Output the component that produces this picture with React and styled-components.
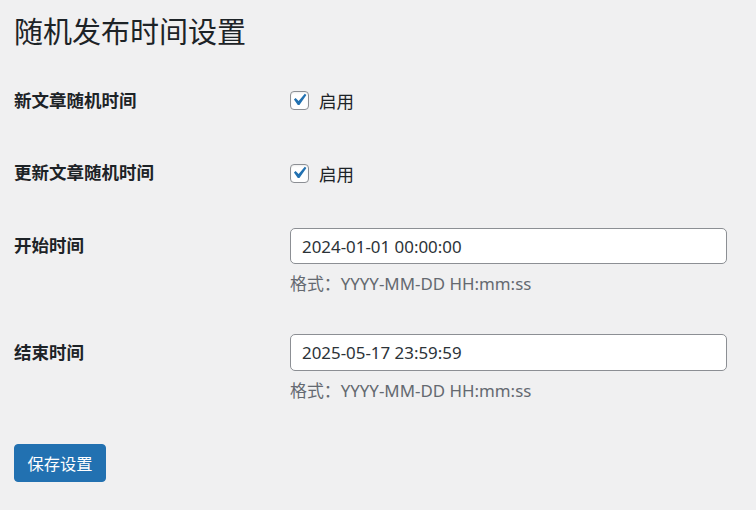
import React from "react";
import styled, { createGlobalStyle } from "styled-components";

const GlobalStyle = createGlobalStyle`
    html, body {
        margin: 0;
        padding: 0;
        background: #f0f0f1;
    }
    body {
        font-family: "Noto Sans", "Noto Sans CJK SC", sans-serif;
        color: #1d2327;
    }
`;

// 设置项
const rows = [
    { label: "新文章随机时间", type: "checkbox", checked: true },
    { label: "更新文章随机时间", type: "checkbox", checked: true },
    { label: "开始时间", type: "text", value: "2024-01-01 00:00:00" },
    { label: "结束时间", type: "text", value: "2025-05-17 23:59:59" },
];

export default function App(){
    return(
        <>
            <GlobalStyle />
            <Wrap>
                <Title>随机发布时间设置</Title>
                <FormTable>
                    {rows.map((row, index) => (
                        <Row key={index} tall={row.type === "text"}>
                            <Label>{row.label}</Label>
                            <Field>
                                {row.type === "checkbox" ? (
                                    <CheckLine>
                                        <CheckBox>
                                            {row.checked && (
                                                <svg width="24" height="24" viewBox="0 0 20 20">
                                                    <path d="M14.83 4.89l1.34.94-5.81 8.38H9.02L5.78 9.67l1.34-1.25 2.57 2.4z" fill="#2271b1" />
                                                </svg>
                                            )}
                                        </CheckBox>
                                        <CheckText>启用</CheckText>
                                    </CheckLine>
                                ) : (
                                    <>
                                        <TextInput type="text" defaultValue={row.value} readOnly />
                                        <Description>格式：YYYY-MM-DD HH:mm:ss</Description>
                                    </>
                                )}
                            </Field>
                        </Row>
                    ))}
                </FormTable>
                <SaveButton>保存设置</SaveButton>
            </Wrap>
        </>
    );
}

const Wrap = styled.div`
    padding: 13px 0 0 14px;
    width: 742px;
    height: 497px;
    box-sizing: border-box;
`;

const Title = styled.h1`
    margin: 0;
    font-size: 29px;
    font-weight: 400;
    line-height: 37px;
    color: #1d2327;
`;

const FormTable = styled.div`
    margin-top: 13.6px;
    display: flex;
    flex-direction: column;
`;

const Row = styled.div`
    display: grid;
    grid-template-columns: 276px 437px;
    height: ${({ tall }) => tall ? "106.5px" : "72.75px"};
`;

const Label = styled.div`
    padding-top: 25px;
    font-size: 17.5px;
    font-weight: 700;
    line-height: 22.75px;
    color: #1d2327;
`;

const Field = styled.div`
    padding-top: 18.75px;
    display: flex;
    flex-direction: column;
`;

const CheckLine = styled.div`
    display: flex;
    align-items: center;
    height: 37px;
    gap: 10px;
`;

const CheckBox = styled.span`
    width: 19px;
    height: 19px;
    box-sizing: border-box;
    border: 1px solid #8c8f94;
    border-radius: 4px;
    background: #fff;
    box-shadow: inset 0 1px 2px rgba(0, 0, 0, 0.08);
    display: flex;
    align-items: center;
    justify-content: center;

    svg {
        flex: none;
        margin: -2px 0 0 -1px;
    }
`;

const CheckText = styled.span`
    font-size: 17.5px;
    line-height: 22px;
    color: #1d2327;
`;

const TextInput = styled.input`
    width: 437px;
    height: 36.5px;
    box-sizing: border-box;
    margin: 0;
    padding: 0 11px;
    border: 1px solid #8c8f94;
    border-radius: 5px;
    background: #fff;
    font-family: "Noto Sans", "Noto Sans CJK SC", sans-serif;
    font-size: 16.9px;
    color: #2c3338;
    outline: none;
`;

const Description = styled.p`
    margin: 8px 0 0;
    font-size: 16.9px;
    line-height: 24px;
    color: #646970;
`;

const SaveButton = styled.button`
    margin-top: 22px;
    height: 38px;
    padding: 0 12.5px;
    border: 1px solid #2271b1;
    border-radius: 4px;
    background: #2271b1;
    color: #fff;
    font-family: "Noto Sans CJK SC", sans-serif;
    font-size: 16.25px;
    line-height: 36px;
    cursor: pointer;
`;
